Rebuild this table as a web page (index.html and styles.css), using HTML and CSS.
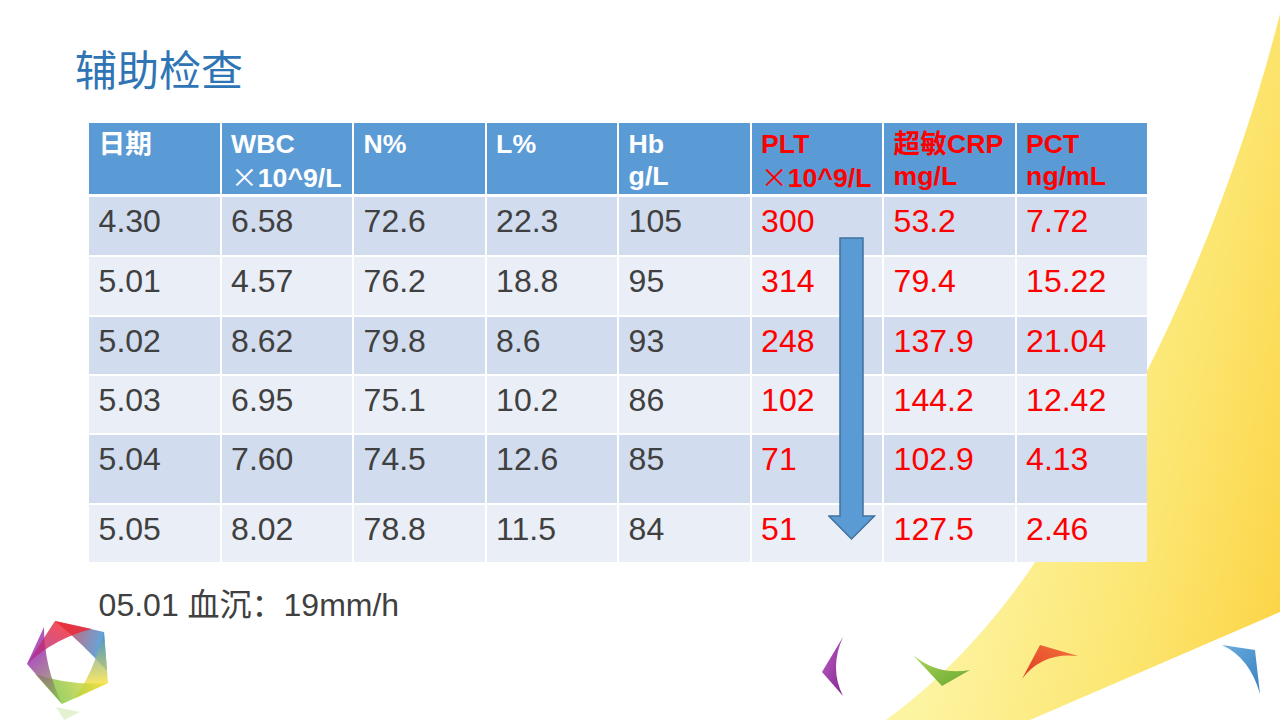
FILE: index.html
```html
<!DOCTYPE html>
<html lang="zh-CN">
<head>
<meta charset="utf-8">
<title>辅助检查</title>
<link rel="stylesheet" href="styles.css">
</head>
<body>
<div class="slide">
  <svg class="deco" width="1280" height="720" viewBox="0 0 1280 720" aria-hidden="true">
    <defs>
      <linearGradient id="sw" gradientUnits="userSpaceOnUse" x1="960" y1="500" x2="1290" y2="570">
        <stop offset="0" stop-color="#fdf4a2"/>
        <stop offset="0.55" stop-color="#fce774"/>
        <stop offset="1" stop-color="#fcd548"/>
      </linearGradient>
      <linearGradient id="gp" x1="0" y1="0" x2="1" y2="1"><stop offset="0" stop-color="#c25ac6"/><stop offset="1" stop-color="#7d2b8e"/></linearGradient>
      <linearGradient id="gg" x1="0" y1="0" x2="1" y2="1"><stop offset="0" stop-color="#a8d65a"/><stop offset="1" stop-color="#6aa630"/></linearGradient>
      <linearGradient id="gr" x1="0" y1="1" x2="1" y2="0"><stop offset="0" stop-color="#e23a22"/><stop offset="1" stop-color="#f2743e"/></linearGradient>
      <linearGradient id="gb" x1="0" y1="0" x2="1" y2="1"><stop offset="0" stop-color="#6aaee0"/><stop offset="1" stop-color="#3a7fc0"/></linearGradient>
      <linearGradient id="l1" gradientUnits="userSpaceOnUse" x1="55" y1="621" x2="104" y2="632"><stop offset="0" stop-color="#ee2530"/><stop offset="1" stop-color="#3d8fd0"/></linearGradient>
      <linearGradient id="l2" gradientUnits="userSpaceOnUse" x1="104" y1="632" x2="108" y2="683"><stop offset="0" stop-color="#3d8fd0"/><stop offset="1" stop-color="#f6e03a"/></linearGradient>
      <linearGradient id="l3" gradientUnits="userSpaceOnUse" x1="108" y1="683" x2="62" y2="704"><stop offset="0" stop-color="#f6e03a"/><stop offset="1" stop-color="#86c540"/></linearGradient>
      <linearGradient id="l4" gradientUnits="userSpaceOnUse" x1="62" y1="704" x2="27" y2="664"><stop offset="0" stop-color="#86c540"/><stop offset="1" stop-color="#9a2fa8"/></linearGradient>
      <linearGradient id="l5" gradientUnits="userSpaceOnUse" x1="27" y1="664" x2="55" y2="621"><stop offset="0" stop-color="#9a2fa8"/><stop offset="1" stop-color="#ee2530"/></linearGradient>
    </defs>
    <path d="M1280,14 C1240,170 1170,360 1040,555 C990,630 940,680 886,720 L1030,720 L1280,612 Z" fill="url(#sw)"/>
    <path d="M843,637 L822,672 L843,696 Q829,668 843,637 Z" fill="url(#gp)"/>
    <path d="M913,655 L942,686 L970,670 Q938,676 913,655 Z" fill="url(#gg)"/>
    <path d="M1022,679 L1040,645 L1078,656 Q1042,652 1022,679 Z" fill="url(#gr)"/>
    <path d="M1222,645 L1255,650 L1260,694 Q1250,658 1222,645 Z" fill="url(#gb)"/>
    <g class="logo">
      <path d="M55,621 L104,632 L107,671 Q83,644 55,621 Z" fill="url(#l1)"/>
      <path d="M104,632 L108,683 L74,699 Q92,676 104,632 Z" fill="url(#l2)"/>
      <path d="M108,683 L62,704 L35,674 Q70,686 108,683 Z" fill="url(#l3)"/>
      <path d="M62,704 L27,664 L44,627 Q44,666 62,704 Z" fill="url(#l4)"/>
      <path d="M27,664 L55,621 L92,629 Q55,638 27,664 Z" fill="url(#l5)"/>
      <polygon points="56,707 80,712 64,720" fill="#a6d36a" opacity="0.3"/>
    </g>
  </svg>

  <h1 class="title">辅助检查</h1>

  <div class="table">
    <div class="row head">
      <div class="cell">日期</div>
      <div class="cell">WBC<br><span class="x">×</span>10^9/L</div>
      <div class="cell">N%</div>
      <div class="cell">L%</div>
      <div class="cell">Hb<br>g/L</div>
      <div class="cell red">PLT<br><span class="x">×</span>10^9/L</div>
      <div class="cell red">超敏CRP<br>mg/L</div>
      <div class="cell red">PCT<br>ng/mL</div>
    </div>
    <div class="row odd r1">
      <div class="cell">4.30</div><div class="cell">6.58</div><div class="cell">72.6</div><div class="cell">22.3</div><div class="cell">105</div><div class="cell red">300</div><div class="cell red">53.2</div><div class="cell red">7.72</div>
    </div>
    <div class="row even r2">
      <div class="cell">5.01</div><div class="cell">4.57</div><div class="cell">76.2</div><div class="cell">18.8</div><div class="cell">95</div><div class="cell red">314</div><div class="cell red">79.4</div><div class="cell red">15.22</div>
    </div>
    <div class="row odd r3">
      <div class="cell">5.02</div><div class="cell">8.62</div><div class="cell">79.8</div><div class="cell">8.6</div><div class="cell">93</div><div class="cell red">248</div><div class="cell red">137.9</div><div class="cell red">21.04</div>
    </div>
    <div class="row even r4">
      <div class="cell">5.03</div><div class="cell">6.95</div><div class="cell">75.1</div><div class="cell">10.2</div><div class="cell">86</div><div class="cell red">102</div><div class="cell red">144.2</div><div class="cell red">12.42</div>
    </div>
    <div class="row odd r5">
      <div class="cell">5.04</div><div class="cell">7.60</div><div class="cell">74.5</div><div class="cell">12.6</div><div class="cell">85</div><div class="cell red">71</div><div class="cell red">102.9</div><div class="cell red">4.13</div>
    </div>
    <div class="row even r6">
      <div class="cell">5.05</div><div class="cell">8.02</div><div class="cell">78.8</div><div class="cell">11.5</div><div class="cell">84</div><div class="cell red">51</div><div class="cell red">127.5</div><div class="cell red">2.46</div>
    </div>
    <svg class="arrow" width="48" height="304" viewBox="0 0 48 304" aria-hidden="true">
      <polygon points="12,1 35,1 35,279 46.5,279 23.5,302 0.8,279 12,279" fill="#5b9bd5" stroke="#41719c" stroke-width="1.5" stroke-linejoin="miter"/>
    </svg>
  </div>

  <p class="note">05.01 血沉：19mm/h</p>
</div>
</body>
</html>
```

FILE: styles.css
```css
html, body {
  margin: 0;
  padding: 0;
  background: #ffffff;
}

.slide {
  position: relative;
  width: 1280px;
  height: 720px;
  overflow: hidden;
  background: #ffffff;
  padding-top: 42px;
  box-sizing: border-box;
  font-family: "Liberation Sans", "Noto Sans CJK SC", Arial, sans-serif;
}

.deco {
  position: absolute;
  left: 0;
  top: 0;
  z-index: 0;
}

.logo path {
  opacity: 0.8;
}

.title {
  position: relative;
  z-index: 1;
  margin: 0 0 29.8px 75px;
  font-family: "Noto Sans CJK SC", sans-serif;
  font-weight: 400;
  font-size: 42px;
  line-height: 51.2px;
  color: #2f74b5;
}

.table {
  position: relative;
  z-index: 1;
  width: 1058px;
  margin-left: 89px;
  display: flex;
  flex-direction: column;
  gap: 2px;
  background: #ffffff;
}

.row {
  display: grid;
  grid-template-columns: repeat(8, 1fr);
  column-gap: 2px;
}

.cell {
  padding: 4.8px 2px 0 9.6px;
  white-space: nowrap;
  overflow: visible;
  color: #404040;
  font-size: 32px;
  line-height: 38.4px;
}

.head {
  height: 71px;
  margin-bottom: 1px;
}

.head .cell {
  background: #5b9bd5;
  color: #ffffff;
  font-weight: 700;
  font-size: 26.67px;
  line-height: 32px;
}

.head .cell.red {
  color: #ff0000;
}

.x {
  font-family: "Noto Sans CJK SC", sans-serif;
  font-weight: 400;
}

.odd .cell {
  background: #d1dcee;
}

.even .cell {
  background: #e9eef7;
}

.cell.red {
  color: #ff0000;
}

.r1 { height: 58px; }
.r2 { height: 58px; }
.r3 { height: 57px; }
.r4 { height: 57px; }
.r5 { height: 68px; }
.r6 { height: 57px; }

.arrow {
  position: absolute;
  left: 739px;
  top: 114px;
}

.note {
  position: relative;
  z-index: 1;
  margin: 24px 0 0 98.6px;
  font-size: 32px;
  line-height: 38.4px;
  color: #404040;
}
```
